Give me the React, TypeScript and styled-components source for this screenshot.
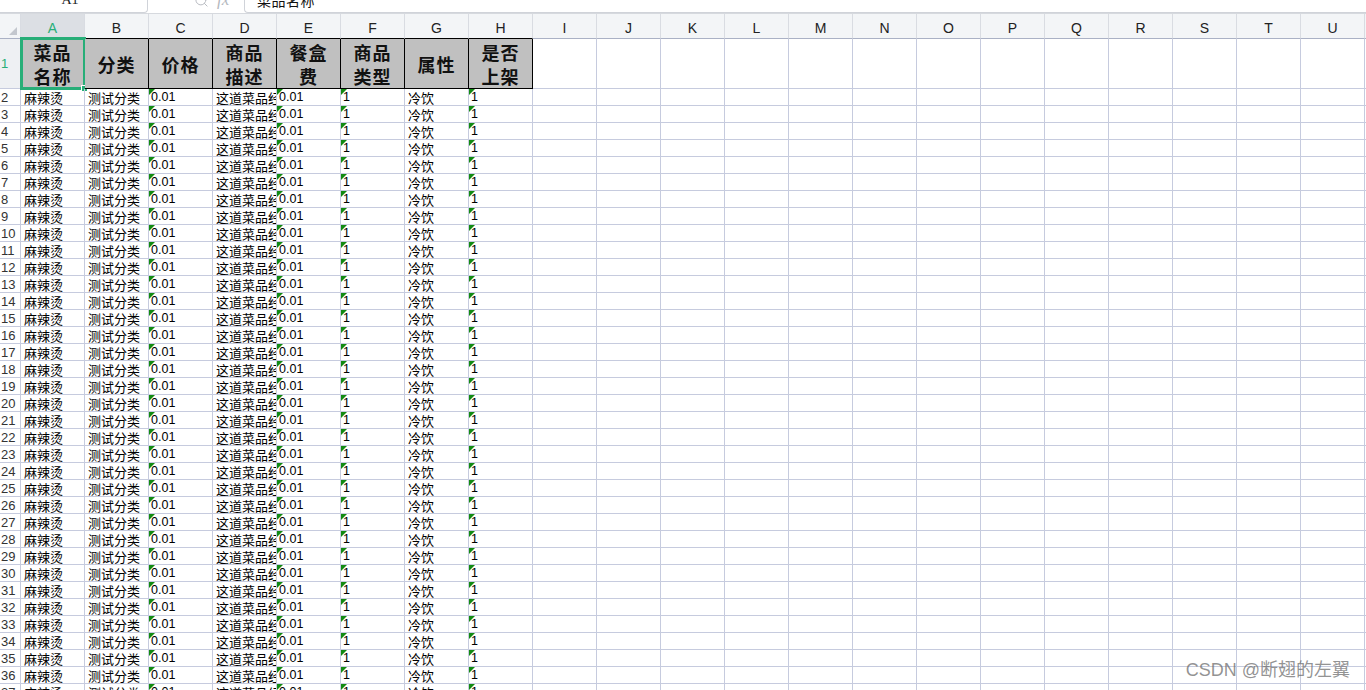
import React from 'react';
import styled, { createGlobalStyle } from 'styled-components';
import { Search } from 'lucide-react';

const GRID = '#c6cbde';
const GREEN = '#27ae78';
const HEAD_BG = '#f3f5f7';
const COLS = 'ABCDEFGHIJKLMNOPQRSTUV'.split('');

const GlobalStyle = createGlobalStyle`
  html, body { margin: 0; padding: 0; background: #fff; overflow: hidden; }
  body { font-family: "Liberation Sans", "Noto Sans CJK SC", sans-serif; color: #000; }
`;

const Page = styled.div`
  width: 1366px;
  height: 690px;
  position: relative;
  overflow: hidden;
  background: #fff;
`;

const FormulaBar = styled.div`
  height: 14px;
  box-sizing: border-box;
  border-bottom: 1px solid #d6d9de;
  display: flex;
  align-items: flex-end;
  overflow: hidden;
`;

const NameBox = styled.div`
  width: 148px;
  height: 26px;
  flex: none;
  box-sizing: border-box;
  border-right: 1px solid #d0d3d9;
  border-bottom: 1px solid #d0d3d9;
  border-bottom-right-radius: 4px;
  display: flex;
  align-items: center;
  font-family: "Liberation Serif", serif;
  font-size: 14px;
  color: #222;
`;

const NameText = styled.span`
  flex: 1;
  text-align: center;
  padding-left: 2px;
`;

const DropArrow = styled.span`
  width: 0;
  height: 0;
  border-left: 3px solid transparent;
  border-right: 3px solid transparent;
  border-top: 3px solid #777;
  margin-right: 3px;
  margin-top: -10px;
`;

const Tools = styled.div`
  width: 96px;
  height: 26px;
  flex: none;
  display: flex;
  align-items: center;
  padding-left: 46px;
  box-sizing: border-box;
  gap: 8px;
  color: #b4b8be;
`;

const Fx = styled.span`
  font-family: "Liberation Serif", serif;
  font-style: italic;
  font-size: 17px;
  color: #b4b8be;
`;

const FormulaInput = styled.div`
  flex: 1;
  height: 26px;
  box-sizing: border-box;
  border-left: 1px solid #d0d3d9;
  border-bottom: 1px solid #d0d3d9;
  border-bottom-left-radius: 4px;
  display: flex;
  align-items: center;
  padding-left: 12px;
  font-family: "Noto Sans CJK SC", sans-serif;
  font-size: 14px;
  letter-spacing: 0.5px;
  color: #111;
`;

const Row = styled.div<{ $h: number }>`
  display: grid;
  grid-template-columns: 21px repeat(22, 64px);
  height: ${(p) => p.$h}px;
  flex: none;
`;

const Corner = styled.div`
  background: ${HEAD_BG};
  border-right: 1px solid #d9dce2;
  border-bottom: 1px solid #aab1c5;
  position: relative;
  &::after {
    content: '';
    position: absolute;
    right: 3px;
    bottom: 3px;
    width: 0;
    height: 0;
    border-left: 8px solid transparent;
    border-bottom: 8px solid #c3c7ce;
  }
`;

const ColHead = styled.div<{ $active?: boolean; $dark?: boolean }>`
  background: ${(p) => (p.$active ? '#dcdfe4' : HEAD_BG)};
  color: ${(p) => (p.$active ? GREEN : '#222')};
  border-right: 1px solid #d9dce2;
  border-bottom: 1px solid ${(p) => (p.$dark ? '#000' : '#aab1c5')};
  font-size: 14px;
  display: flex;
  align-items: center;
  justify-content: center;
  padding-top: 3px;
  box-sizing: border-box;
`;

const RowHead = styled.div<{ $active?: boolean }>`
  background: ${(p) => (p.$active ? '#eef0f3' : '#fff')};
  color: ${(p) => (p.$active ? GREEN : '#333')};
  border-right: 1px solid ${GRID};
  border-bottom: 1px solid ${GRID};
  font-size: 13px;
  display: flex;
  align-items: center;
  padding-left: 1px;
  overflow: hidden;
`;

const TitleCell = styled.div`
  background: #c0c0c0;
  border-right: 1px solid #000;
  border-bottom: 1px solid #000;
  font-family: "Noto Sans CJK SC", sans-serif;
  font-weight: 700;
  font-size: 18px;
  line-height: 24px;
  letter-spacing: 1px;
  color: #111;
  display: flex;
  align-items: center;
  justify-content: center;
  text-align: center;
  position: relative;
`;

const Selection = styled.div`
  position: absolute;
  left: -1px;
  top: -2px;
  right: -2px;
  bottom: -2px;
  border: 3px solid ${GREEN};
  pointer-events: none;
`;

const Handle = styled.div`
  position: absolute;
  right: -5px;
  bottom: -5px;
  width: 5px;
  height: 5px;
  background: ${GREEN};
  border: 1px solid #fff;
`;

const Cell = styled.div<{ $num?: boolean }>`
  border-right: 1px solid ${GRID};
  border-bottom: 1px solid ${GRID};
  font-family: ${(p) =>
    p.$num ? '"Liberation Sans", sans-serif' : '"Noto Sans CJK SC", sans-serif'};
  font-size: ${(p) => (p.$num ? 12.5 : 13)}px;
  padding-left: ${(p) => (p.$num ? 2 : 3)}px;
  white-space: nowrap;
  overflow: hidden;
  position: relative;
  display: flex;
  align-items: center;
  color: #000;
`;

const TextFlag = styled.span`
  position: absolute;
  left: 0;
  top: 0;
  width: 0;
  height: 0;
  border-top: 6px solid #128a12;
  border-right: 6px solid transparent;
`;

const Watermark = styled.div`
  position: absolute;
  right: 16px;
  bottom: 9px;
  font-family: "Liberation Sans", "Noto Sans CJK SC", sans-serif;
  font-size: 18px;
  color: rgba(105, 105, 105, 0.72);
  pointer-events: none;
`;

const titles = [
  ['菜品', '名称'],
  ['分类'],
  ['价格'],
  ['商品', '描述'],
  ['餐盒', '费'],
  ['商品', '类型'],
  ['属性'],
  ['是否', '上架'],
];

const dataRow: { text: string; num?: boolean; flag?: boolean }[] = [
  { text: '麻辣烫' },
  { text: '测试分类' },
  { text: '0.01', num: true, flag: true },
  { text: '这道菜品经典美味' },
  { text: '0.01', num: true, flag: true },
  { text: '1', num: true, flag: true },
  { text: '冷饮' },
  { text: '1', num: true, flag: true },
];

const EMPTY = COLS.length - dataRow.length;

export default function App() {
  const rows = Array.from({ length: 36 }, (_, i) => i + 2);
  return (
    <Page>
      <GlobalStyle />
      <FormulaBar>
        <NameBox>
          <NameText>A1</NameText>
          <DropArrow />
        </NameBox>
        <Tools>
          <Search size={15} strokeWidth={1.5} />
          <Fx>fx</Fx>
        </Tools>
        <FormulaInput>菜品名称</FormulaInput>
      </FormulaBar>

      <Row $h={25}>
        <Corner />
        {COLS.map((c, i) => (
          <ColHead key={c} $active={i === 0} $dark={i < 8}>
            {c}
          </ColHead>
        ))}
      </Row>

      <Row $h={50}>
        <RowHead $active>1</RowHead>
        {titles.map((lines, i) => (
          <TitleCell key={i}>
            <div>
              {lines.map((l, j) => (
                <div key={j}>{l}</div>
              ))}
            </div>
            {i === 0 && (
              <Selection>
                <Handle />
              </Selection>
            )}
          </TitleCell>
        ))}
        {Array.from({ length: EMPTY }, (_, i) => (
          <Cell key={`e${i}`} />
        ))}
      </Row>

      {rows.map((r) => (
        <Row $h={17} key={r}>
          <RowHead>{r}</RowHead>
          {dataRow.map((d, i) => (
            <Cell key={i} $num={d.num}>
              {d.flag && <TextFlag />}
              {d.text}
            </Cell>
          ))}
          {Array.from({ length: EMPTY }, (_, i) => (
            <Cell key={`e${i}`} />
          ))}
        </Row>
      ))}

      <Watermark>CSDN @断翅的左翼</Watermark>
    </Page>
  );
}
